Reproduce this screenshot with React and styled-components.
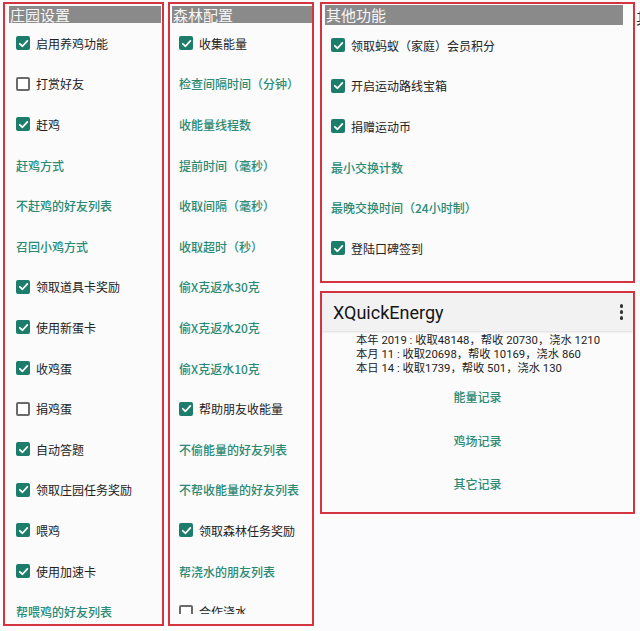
import React from "react";
import styled, { createGlobalStyle } from "styled-components";

const Global = createGlobalStyle`
  html, body { margin: 0; padding: 0; }
  body {
    width: 640px; height: 631px; overflow: hidden;
    background: #fbfafc;
    font-family: "Noto Sans CJK SC", "Noto Sans", sans-serif;
  }
`;

const Page = styled.div`
  display: flex;
  align-items: flex-start;
  padding: 2px 0 0 3px;
  width: 640px;
  height: 631px;
  box-sizing: border-box;
  overflow: hidden;
`;

const Column = styled.div`
  flex: none;
  width: ${(p) => p.$w}px;
  margin-left: ${(p) => p.$ml || 0}px;
  display: flex;
  flex-direction: column;
  gap: 8px;
`;

const Panel = styled.section`
  box-sizing: border-box;
  height: ${(p) => p.$h}px;
  border: 2px solid #d3343f;
  padding: ${(p) => p.$pad};
  display: flex;
  flex-direction: column;
  background: #fbfbfc;
  overflow: hidden;
`;

const Header = styled.div`
  flex: none;
  height: ${(p) => p.$h}px;
  line-height: ${(p) => p.$h}px;
  background: #8a8a8a;
  color: #f6f6f6;
  font-size: 15px;
  padding-left: 1px;
  white-space: nowrap;
`;

const List = styled.div`
  flex: 1;
  overflow: hidden;
  display: flex;
  flex-direction: column;
`;

const Row = styled.div`
  flex: none;
  height: 40.6px;
  display: flex;
  align-items: center;
  gap: 6px;
  padding-left: ${(p) => p.$pl || 7}px;
  font-size: 12px;
  color: ${(p) => (p.$link ? "#2a8a73" : "#222")};
  font-weight: ${(p) => (p.$link ? 500 : 400)};
  white-space: nowrap;
`;

const Box = styled.span`
  flex: none;
  width: 14px;
  height: 14px;
  box-sizing: border-box;
  border-radius: 2px;
  background: ${(p) => (p.$on ? "#1c7d6a" : "#fff")};
  border: ${(p) => (p.$on ? "none" : "2px solid #6a6a6a")};
  display: flex;
  align-items: center;
  justify-content: center;
`;

const Check = ({ on }) => (
  <Box $on={on}>
    {on && (
      <svg width="11" height="11" viewBox="0 0 12 12">
        <path d="M2 6.3 L4.9 9 L10.2 3.2" fill="none" stroke="#fff" strokeWidth="1.9" strokeLinecap="round" strokeLinejoin="round" />
      </svg>
    )}
  </Box>
);

const Item = ({ t, c, pl }) =>
  c === undefined ? (
    <Row $link $pl={pl}>{t}</Row>
  ) : (
    <Row $pl={pl}>
      <Check on={c} />
      {t}
    </Row>
  );

const AppBar = styled.div`
  flex: none;
  height: 38px;
  background: #f2f2f3;
  box-shadow: 0 1px 2px rgba(0, 0, 0, 0.12);
  display: flex;
  align-items: center;
  justify-content: space-between;
  padding: 0 10px 0 11px;
`;

const Title = styled.div`
  font-family: Roboto, "Noto Sans", sans-serif;
  font-size: 18px;
  color: #151515;
`;

const Dots = styled.div`
  display: flex;
  flex-direction: column;
  gap: 2.5px;
  span {
    width: 3.5px;
    height: 3.5px;
    border-radius: 50%;
    background: #333;
  }
`;

const Stats = styled.div`
  padding: 3px 0 0 34px;
  font-size: 11.3px;
  line-height: 13.8px;
  color: #222;
  white-space: nowrap;
  font-family: Roboto, "Noto Sans CJK SC", sans-serif;
`;

const Links = styled.div`
  display: flex;
  flex-direction: column;
  align-items: center;
`;

const CenterLink = styled.div`
  height: 43.5px;
  line-height: 43.5px;
  font-size: 12px;
  font-weight: 500;
  color: #2a8a73;
`;

const Fragment = styled.div`
  flex: none;
  margin-left: 1px;
  padding-top: 5px;
  font-size: 15px;
  color: #333;
  white-space: nowrap;
`;

const farm = [
  ["启用养鸡功能", true],
  ["打赏好友", false],
  ["赶鸡", true],
  ["赶鸡方式"],
  ["不赶鸡的好友列表"],
  ["召回小鸡方式"],
  ["领取道具卡奖励", true],
  ["使用新蛋卡", true],
  ["收鸡蛋", true],
  ["捐鸡蛋", false],
  ["自动答题", true],
  ["领取庄园任务奖励", true],
  ["喂鸡", true],
  ["使用加速卡", true],
  ["帮喂鸡的好友列表"],
];

const forest = [
  ["收集能量", true],
  ["检查间隔时间（分钟）"],
  ["收能量线程数"],
  ["提前时间（毫秒）"],
  ["收取间隔（毫秒）"],
  ["收取超时（秒）"],
  ["偷X克返水30克"],
  ["偷X克返水20克"],
  ["偷X克返水10克"],
  ["帮助朋友收能量", true],
  ["不偷能量的好友列表"],
  ["不帮收能量的好友列表"],
  ["领取森林任务奖励", true],
  ["帮浇水的朋友列表"],
  ["合作浇水", false],
];

const other = [
  ["领取蚂蚁（家庭）会员积分", true],
  ["开启运动路线宝箱", true],
  ["捐赠运动币", true],
  ["最小交换计数"],
  ["最晚交换时间（24小时制）"],
  ["登陆口碑签到", true],
];

export default function App() {
  return (
    <>
      <Global />
      <Page>
        <Column $w={161}>
          <Panel $h={624} $pad="2px 1px 4px 4px">
            <Header $h={17}>庄园设置</Header>
            <List>
              {farm.map(([t, c]) => (
                <Item key={t} t={t} c={c} />
              ))}
            </List>
          </Panel>
        </Column>
        <Column $w={146} $ml={4}>
          <Panel $h={624} $pad="2px 0 10px 2px">
            <Header $h={17}>森林配置</Header>
            <List>
              {forest.map(([t, c]) => (
                <Item key={t} t={t} c={c} />
              ))}
            </List>
          </Panel>
        </Column>
        <Column $w={315} $ml={6}>
          <Panel $h={281} $pad="1px 10px 0 3px">
            <Header $h={20}>其他功能</Header>
            <List>
              {other.map(([t, c]) => (
                <Item key={t} t={t} c={c} pl={6} />
              ))}
            </List>
          </Panel>
          <Panel $h={223} $pad="0">
            <AppBar>
              <Title>XQuickEnergy</Title>
              <Dots>
                <span />
                <span />
                <span />
              </Dots>
            </AppBar>
            <Stats>
              <div>本年 2019 : 收取48148，帮收 20730，浇水 1210</div>
              <div>本月 11 : 收取20698，帮收 10169，浇水 860</div>
              <div>本日 14 : 收取1739，帮收 501，浇水 130</div>
            </Stats>
            <Links>
              <CenterLink>能量记录</CenterLink>
              <CenterLink>鸡场记录</CenterLink>
              <CenterLink>其它记录</CenterLink>
            </Links>
          </Panel>
        </Column>
        <Fragment>其他</Fragment>
      </Page>
    </>
  );
}
